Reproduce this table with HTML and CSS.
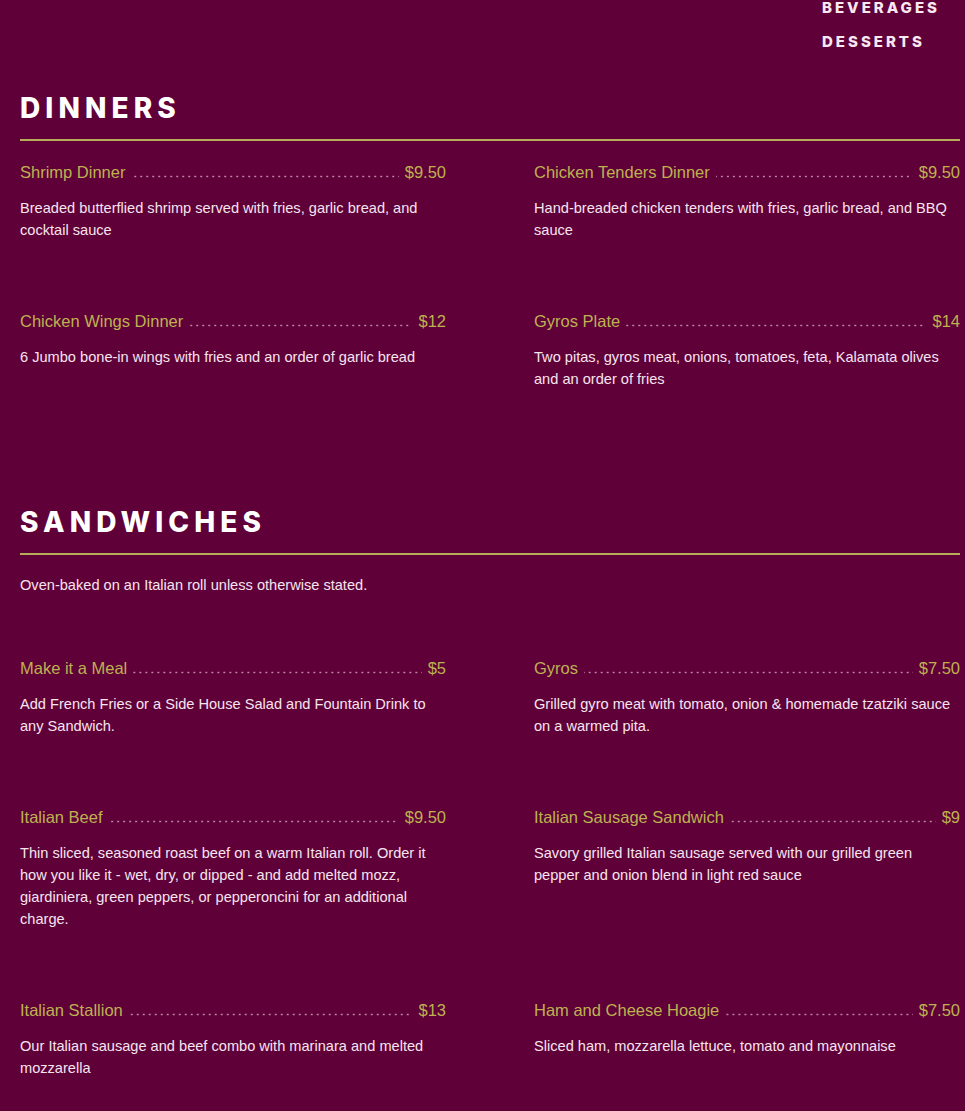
FILE: index.html
```html
<!DOCTYPE html>
<html lang="en">
<head>
<meta charset="utf-8">
<title>Menu</title>
<link rel="stylesheet" href="styles.css">
</head>
<body>
<div class="page">
  <nav class="nav">
    <a class="nav-link" href="#">Beverages</a>
    <a class="nav-link" href="#">Desserts</a>
  </nav>

  <section class="section">
    <h2 class="section-title">Dinners</h2>
    <div class="grid">
      <div class="item">
        <div class="item-head"><span class="item-name">Shrimp Dinner</span><span class="dots"></span><span class="item-price">$9.50</span></div>
        <p class="item-desc">Breaded butterflied shrimp served with fries, garlic bread, and cocktail sauce</p>
      </div>
      <div class="item">
        <div class="item-head"><span class="item-name">Chicken Tenders Dinner</span><span class="dots"></span><span class="item-price">$9.50</span></div>
        <p class="item-desc">Hand-breaded chicken tenders with fries, garlic bread, and BBQ sauce</p>
      </div>
      <div class="item">
        <div class="item-head"><span class="item-name">Chicken Wings Dinner</span><span class="dots"></span><span class="item-price">$12</span></div>
        <p class="item-desc">6 Jumbo bone-in wings with fries and an order of garlic bread</p>
      </div>
      <div class="item">
        <div class="item-head"><span class="item-name">Gyros Plate</span><span class="dots"></span><span class="item-price">$14</span></div>
        <p class="item-desc">Two pitas, gyros meat, onions, tomatoes, feta, Kalamata olives and an order of fries</p>
      </div>
    </div>
  </section>

  <section class="section">
    <h2 class="section-title">Sandwiches</h2>
    <p class="intro">Oven-baked on an Italian roll unless otherwise stated.</p>
    <div class="grid">
      <div class="item">
        <div class="item-head"><span class="item-name">Make it a Meal</span><span class="dots"></span><span class="item-price">$5</span></div>
        <p class="item-desc">Add French Fries or a Side House Salad and Fountain Drink to any Sandwich.</p>
      </div>
      <div class="item">
        <div class="item-head"><span class="item-name">Gyros</span><span class="dots"></span><span class="item-price">$7.50</span></div>
        <p class="item-desc">Grilled gyro meat with tomato, onion &amp; homemade tzatziki sauce on a warmed pita.</p>
      </div>
      <div class="item">
        <div class="item-head"><span class="item-name">Italian Beef</span><span class="dots"></span><span class="item-price">$9.50</span></div>
        <p class="item-desc">Thin sliced, seasoned roast beef on a warm Italian roll. Order it how you like it - wet, dry, or dipped - and add melted mozz, giardiniera, green peppers, or pepperoncini for an additional charge.</p>
      </div>
      <div class="item">
        <div class="item-head"><span class="item-name">Italian Sausage Sandwich</span><span class="dots"></span><span class="item-price">$9</span></div>
        <p class="item-desc">Savory grilled Italian sausage served with our grilled green pepper and onion blend in light red sauce</p>
      </div>
      <div class="item">
        <div class="item-head"><span class="item-name">Italian Stallion</span><span class="dots"></span><span class="item-price">$13</span></div>
        <p class="item-desc">Our Italian sausage and beef combo with marinara and melted mozzarella</p>
      </div>
      <div class="item">
        <div class="item-head"><span class="item-name">Ham and Cheese Hoagie</span><span class="dots"></span><span class="item-price">$7.50</span></div>
        <p class="item-desc">Sliced ham, mozzarella lettuce, tomato and mayonnaise</p>
      </div>
    </div>
  </section>
</div>
</body>
</html>
```

FILE: styles.css
```css
html, body {
  background: #5f0039;
}

body {
  margin: 0;
  font-family: "Liberation Sans", Arial, sans-serif;
  color: #f6e4ee;
}

.page {
  padding: 0 5px 0 20px;
}

.nav {
  display: flex;
  flex-direction: column;
  align-items: flex-start;
  width: 138px;
  margin-left: auto;
  margin-top: -9px;
}

.nav-link {
  font-family: Inter, "DejaVu Sans", sans-serif;
  font-weight: 800;
  font-size: 15px;
  line-height: 34px;
  letter-spacing: 3px;
  text-transform: uppercase;
  color: #f8e8f1;
  text-decoration: none;
}

.section {
  margin-top: 29px;
  margin-bottom: 112px;
}

.section + .section {
  margin-top: 0;
}

.section-title {
  margin: 0;
  font-family: Inter, "DejaVu Sans", sans-serif;
  font-weight: 800;
  font-size: 28px;
  line-height: 40px;
  letter-spacing: 5.1px;
  text-transform: uppercase;
  color: #ffffff;
  padding-bottom: 11px;
  border-bottom: 2px solid #b6ad58;
}

.intro {
  margin: 19px 0 0;
  font-size: 14.6px;
  line-height: 22px;
}

.grid {
  display: grid;
  grid-template-columns: 1fr 1fr;
  column-gap: 88px;
  row-gap: 68px;
  margin-top: 19px;
}

.intro + .grid {
  margin-top: 60px;
}

.item-head {
  display: flex;
  align-items: baseline;
  font-size: 16.5px;
  line-height: 24px;
  color: #bdb24f;
}

.item-name {
  white-space: nowrap;
}

.item-price {
  white-space: nowrap;
}

.dots {
  flex: 1;
  height: 3px;
  margin: 0 6px;
  background-image: radial-gradient(circle at 1px 1.5px, rgba(236, 190, 214, 0.7) 0.8px, transparent 1.2px);
  background-size: 6px 3px;
  background-repeat: repeat-x;
  background-position: right bottom;
}

.item-desc {
  margin: 13px 0 0;
  font-size: 14.6px;
  line-height: 22px;
  color: #f6e4ee;
}
```
